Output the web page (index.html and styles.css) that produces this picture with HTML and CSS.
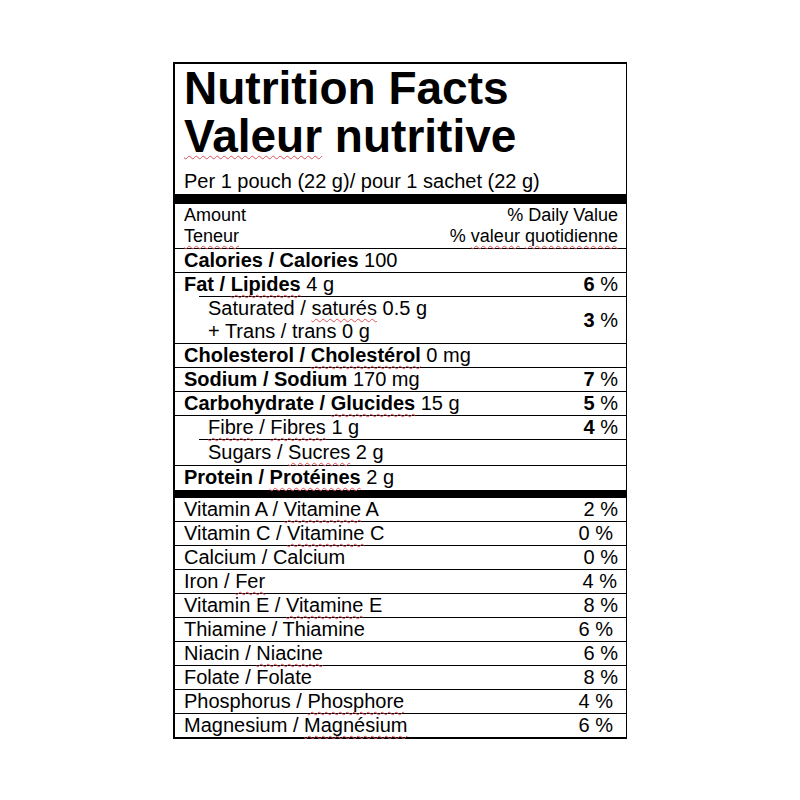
FILE: index.html
```html
<!DOCTYPE html>
<html lang="en">
<head>
<meta charset="utf-8">
<title>Nutrition Facts</title>
<link rel="stylesheet" href="styles.css">
</head>
<body>
<div class="label">
  <header class="head">
    <h1 class="title">Nutrition Facts<br><span class="sp">Valeur</span> nutritive</h1>
    <p class="serving">Per 1 pouch (22 g)/ pour 1 sachet (22 g)</p>
  </header>
  <div class="bar"></div>
  <div class="amount">
    <div class="arow"><span>Amount</span><span>% Daily Value</span></div>
    <div class="arow"><span class="sp">Teneur</span><span>% <span class="sp">valeur</span> <span class="sp">quotidienne</span></span></div>
  </div>
  <div class="row"><span><b>Calories / Calories</b> 100</span></div>
  <div class="row indent-line"><span><b>Fat / <span class="sp">Lipides</span></b> 4 g</span><span class="pct"><b>6</b> %</span></div>
  <div class="row sub two"><span>Saturated / <span class="sp">saturés</span> 0.5 g<br>+ Trans / trans 0 g</span><span class="pct"><b>3</b> %</span></div>
  <div class="row"><span><b>Cholesterol / <span class="sp">Cholestérol</span></b> 0 mg</span></div>
  <div class="row"><span><b>Sodium / Sodium</b> 170 mg</span><span class="pct"><b>7</b> %</span></div>
  <div class="row"><span><b>Carbohydrate / <span class="sp">Glucides</span></b> 15 g</span><span class="pct"><b>5</b> %</span></div>
  <div class="row sub indent-line"><span><span class="sp">Fibre</span> / <span class="sp">Fibres</span> 1 g</span><span class="pct"><b>4</b> %</span></div>
  <div class="row sub tall"><span>Sugars / <span class="sp">Sucres</span> 2 g</span></div>
  <div class="row last"><span><b>Protein / <span class="sp">Protéines</span></b> 2 g</span></div>
  <div class="bar thin"></div>
  <div class="row"><span>Vitamin A / <span class="sp">Vitamine</span> A</span><span class="pct">2 %</span></div>
  <div class="row"><span>Vitamin C / <span class="sp">Vitamine</span> C</span><span class="pct nudge">0 %</span></div>
  <div class="row"><span>Calcium / Calcium</span><span class="pct">0 %</span></div>
  <div class="row"><span>Iron / <span class="sp">Fer</span></span><span class="pct nudge1">4 %</span></div>
  <div class="row"><span>Vitamin E / <span class="sp">Vitamine</span> E</span><span class="pct">8 %</span></div>
  <div class="row"><span>Thiamine / Thiamine</span><span class="pct nudge">6 %</span></div>
  <div class="row"><span>Niacin / <span class="sp">Niacine</span></span><span class="pct">6 %</span></div>
  <div class="row"><span>Folate / Folate</span><span class="pct">8 %</span></div>
  <div class="row"><span>Phosphorus / <span class="sp">Phosphore</span></span><span class="pct nudge">4 %</span></div>
  <div class="row last"><span>Magnesium / <span class="sp">Magnésium</span></span><span class="pct nudge">6 %</span></div>
</div>
</body>
</html>
```

FILE: styles.css
```css
html, body {
  margin: 0;
  padding: 0;
  background: #fff;
}

body {
  font-family: "Liberation Sans", Arial, sans-serif;
  color: #000;
}

.label {
  box-sizing: border-box;
  width: 454px;
  margin: 62px 0 0 173px;
  border: 2px solid #000;
  border-right-width: 1px;
}

.head {
  padding: 0 8px 0 9px;
}

.title {
  margin: 0;
  font-size: 46px;
  font-weight: 700;
  line-height: 48px;
}

.serving {
  margin: 9px 0 0;
  font-size: 20px;
  line-height: 24px;
  padding-bottom: 1px;
}

.bar {
  height: 10px;
  background: #000;
}

.bar.thin {
  height: 8px;
}

.amount {
  padding: 1px 8px 1px 9px;
  border-bottom: 1px solid #000;
  font-size: 18px;
  line-height: 21px;
}

.arow {
  display: flex;
  justify-content: space-between;
}

.row {
  display: flex;
  justify-content: space-between;
  align-items: flex-start;
  padding: 0 8px 0 9px;
  font-size: 20px;
  line-height: 23px;
  border-bottom: 1px solid #000;
}

.row.last {
  border-bottom: none;
  height: 24px;
}

.row:last-child {
  height: 23px;
}

.row.sub {
  padding-left: 33px;
}

.row.two {
  align-items: center;
}

.row.tall {
  line-height: 25px;
}

.row.indent-line {
  border-bottom: none;
  padding-bottom: 1px;
  background: linear-gradient(#000, #000) 24px 100% / calc(100% - 24px) 1px no-repeat;
}

.pct b {
  font-weight: 700;
}

.pct.nudge {
  padding-right: 5px;
}

.pct.nudge1 {
  padding-right: 1px;
}

.sp {
  text-decoration: underline wavy #e0505a;
  text-decoration-thickness: 1px;
  text-underline-offset: 3px;
  text-decoration-skip-ink: none;
}
```
